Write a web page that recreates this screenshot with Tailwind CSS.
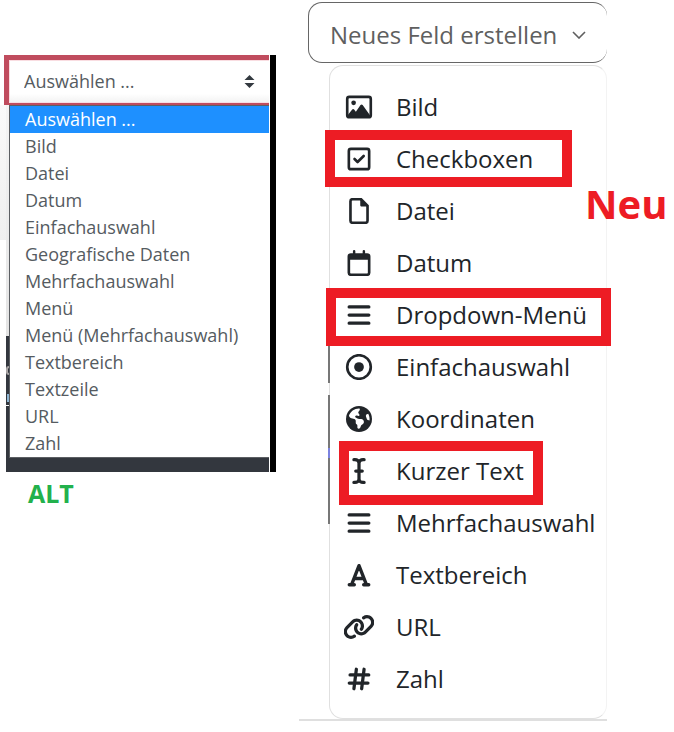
<!DOCTYPE html>
<html lang="de">
<head>
    <meta charset="UTF-8">
    <meta name="viewport" content="width=device-width, initial-scale=1">
    <title>Neues Feld erstellen</title>
    <!-- Tailwind CSS -->
    <script src="https://cdn.jsdelivr.net/npm/@tailwindcss/browser@4"></script>
</head>
<body class="bg-white font-['Open_Sans','Noto_Sans',sans-serif] text-[#212529]">

<main class="grid grid-cols-[276fr_331fr_67fr] items-start">

    <!-- Old field selection -->
    <section class="pt-[55px]">
        <div class="flex">
            <div class="min-w-0 flex-1">
                <div class="ml-1 border-5 border-r-0 border-[#c04c5e] bg-white">
                    <div class="relative border border-r-0 border-[#f9dde1]">
                        <select aria-label="Feldtyp" class="block h-[41px] w-full appearance-none bg-white bg-linear-to-b from-white from-80% to-[#f3f3f3] pl-[14px] text-[18px] leading-[27px] text-[#555b61]">
                            <option>Auswählen ...</option>
                        </select>
                        <svg class="pointer-events-none absolute top-[14px] right-[14px] h-[13px] w-[11px]" viewBox="0 0 11 13" fill="#343a40"><path d="M5.5 0 10.5 5H.5zM5.5 13 10.5 8H.5z"/></svg>
                    </div>
                </div>
                <div class="relative ml-[6px] bg-linear-to-b from-[#f4f4f4] from-0% via-[#e4e4e4] via-63% to-[#33373e] to-63% pb-[14px] pl-[3px]">
                    <!-- page behind the open list -->
                    <span class="absolute top-0 -left-[6px] h-[135px] w-[6px] bg-linear-to-b from-[#fafafa] to-[#efefef]"></span>
                    <span class="absolute top-[261px] left-0 h-[9px] w-[3px] rounded-l-full border-2 border-r-0 border-[#a9a5a5]"></span>
                    <span class="absolute top-[289px] left-px h-[8px] w-[2px] bg-[#8fb6d3]"></span>
                    <span class="absolute top-[300px] left-0 h-px w-[3px] bg-white"></span>
                    <ul class="relative -mt-[3px] border-t border-b border-l border-[#5c5f63] bg-white text-[18px] leading-[27px] text-[#555b61]" role="listbox" aria-label="Feldtyp">
                        <li class="bg-[#1e90ff] pl-[15px] text-white" role="option" aria-selected="true">Auswählen ...</li>
                        <li class="pl-[15px]" role="option">Bild</li>
                        <li class="pl-[15px]" role="option">Datei</li>
                        <li class="pl-[15px]" role="option">Datum</li>
                        <li class="pl-[15px]" role="option">Einfachauswahl</li>
                        <li class="pl-[15px]" role="option">Geografische Daten</li>
                        <li class="pl-[15px]" role="option">Mehrfachauswahl</li>
                        <li class="pl-[15px]" role="option">Menü</li>
                        <li class="pl-[15px]" role="option">Menü (Mehrfachauswahl)</li>
                        <li class="pl-[15px]" role="option">Textbereich</li>
                        <li class="pl-[15px]" role="option">Textzeile</li>
                        <li class="pl-[15px]" role="option">URL</li>
                        <li class="pl-[15px]" role="option">Zahl</li>
                    </ul>
                </div>
            </div>
            <div class="ml-px w-[6px] bg-black"></div>
        </div>
        <p class="pt-1 pl-7 text-[25px] leading-[34px] font-bold text-[#22b14c]">ALT</p>
    </section>

    <!-- New field selection -->
    <section class="ml-[23px] border-b-2 border-[#dfdfdf] pt-[2px]">
        <button type="button" class="ml-[9px] flex h-[61px] w-[calc(100%-9px)] items-center rounded-[14px] border border-r-0 border-[#666] pt-[5px] pl-[21px] text-2xl text-[#5f5f5f]">
            Neues Feld erstellen
            <svg class="ml-[15px] h-[8px] w-[14px]" viewBox="0 0 14 8" fill="none" stroke="#5f5f5f" stroke-width="1.6"><path d="M1 1l6 6 6-6"/></svg>
        </button>
        <ul class="relative mt-[2px] ml-[30px] rounded-[14px] border border-[#e0e0e0] border-r-[#f3f3f3] pt-[15px] pb-[13px] text-2xl">
            <li>
                <button type="button" class="flex h-[52px] w-full items-center gap-[22px] pl-[14px]">
                    <svg class="h-[26px] w-[30px]" viewBox="0 0 512 512" fill="#212529"><rect x="24" y="56" width="464" height="400" rx="40" fill="none" stroke="#212529" stroke-width="52"/><circle cx="150" cy="174" r="46"/><path d="M40 440v-30l82-106c10-14 28-14 38 0l34 46 92-132c12-18 30-18 42 0l144 202v20z"/></svg>
                    Bild
                </button>
            </li>
            <li class="relative">
                <button type="button" class="flex h-[52px] w-full items-center gap-[22px] pl-[14px]">
                    <svg class="h-[26px] w-[30px]" viewBox="-32 0 512 512" fill="none" stroke="#212529" stroke-width="52" stroke-linecap="round" stroke-linejoin="round"><rect x="24" y="56" width="400" height="400" rx="40"/><path d="M136 256l60 60 120-120"/></svg>
                    Checkboxen
                </button>
                <span class="pointer-events-none absolute -top-[3px] -left-[5px] h-[57px] w-[247px] border-10 border-[#ed1c24]"></span>
            </li>
            <li>
                <button type="button" class="flex h-[52px] w-full items-center gap-[22px] pl-[14px]">
                    <svg class="h-[26px] w-[30px]" viewBox="-64 0 512 512" fill="#212529"><path d="M64 24H232L360 152V448a40 40 0 0 1-40 40H64a40 40 0 0 1-40-40V64a40 40 0 0 1 40-40z" fill="none" stroke="#212529" stroke-width="52"/><path d="M216 16v120c0 18 14 32 32 32h120z"/></svg>
                    Datei
                </button>
            </li>
            <li>
                <button type="button" class="flex h-[52px] w-full items-center gap-[22px] pl-[14px]">
                    <svg class="h-[26px] w-[30px]" viewBox="-32 0 512 512" fill="#212529"><rect x="24" y="88" width="400" height="400" rx="40" fill="none" stroke="#212529" stroke-width="52"/><path d="M24 88h400v104H24z"/><path d="M128 24v80M320 24v80" stroke="#212529" stroke-width="48" stroke-linecap="round"/></svg>
                    Datum
                </button>
            </li>
            <li class="relative">
                <button type="button" class="flex h-[52px] w-full items-center gap-[22px] pl-[14px]">
                    <svg class="h-[26px] w-[30px]" viewBox="-32 0 512 512" stroke="#212529" stroke-width="64" stroke-linecap="round"><path d="M30 96h388M30 256h388M30 416h388"/></svg>
                    Dropdown-Menü
                </button>
                <!-- darker edge beside the following rows -->
                <span class="absolute top-[55px] -left-[2px] h-[39px] w-[2px] bg-[#777]"></span>
                <span class="absolute top-[106px] -left-[2px] h-[129px] w-[2px] bg-[#777]"></span>
                <span class="absolute top-[159px] -left-[2px] h-[10px] w-[2px] bg-[#7b83e0]"></span>
                <span class="pointer-events-none absolute -top-[1px] -left-[4px] h-[58px] w-[285px] border-10 border-[#ed1c24]"></span>
            </li>
            <li>
                <button type="button" class="flex h-[52px] w-full items-center gap-[22px] pl-[14px]">
                    <svg class="h-[26px] w-[30px]" viewBox="0 0 512 512" fill="#212529"><circle cx="256" cy="256" r="232" fill="none" stroke="#212529" stroke-width="52"/><circle cx="256" cy="256" r="96"/></svg>
                    Einfachauswahl
                </button>
            </li>
            <li>
                <button type="button" class="flex h-[52px] w-full items-center gap-[22px] pl-[14px]">
                    <svg class="h-[26px] w-[30px]" viewBox="0 0 512 512" fill="#212529"><circle cx="256" cy="256" r="256"/><path fill="#fff" d="M57.7 193l9.4 16.4c8.3 14.5 21.9 25.2 38 29.8L163 255.7c17.2 4.9 29 20.6 29 38.5v39.9c0 11 6.2 21 16 25.9s16 14.9 16 25.9v39c0 15.6 14.9 26.9 29.9 22.6c16.1-4.6 28.6-17.5 32.7-33.8l2.8-11.2c4.2-16.9 15.2-31.4 30.3-40l8.1-4.6c15-8.5 24.2-24.5 24.2-41.7v-8.3c0-12.7-5.1-24.9-14.1-33.9l-3.9-3.9c-9-9-21.2-14.1-33.9-14.1H257c-11.1 0-22.1-2.9-31.8-8.4l-34.5-19.7c-4.3-2.5-7.6-6.5-9.2-11.2c-3.2-9.6 1.1-20 10.2-24.5l5.9-3c6.6-3.3 14.3-3.9 21.3-1.5l23.2 7.7c8.2 2.7 17.2-.4 21.9-7.5c4.7-7 4.2-16.3-1.2-22.8l-13.6-16.3c-10-12-9.9-29.5 .3-41.3l15.7-18.3c8.8-10.3 10.2-25 3.5-36.7l-2.4-4.2c-3.5-.2-6.9-.3-10.4-.3C163.1 48 84.4 108.9 57.7 193zM464 256c0-36.8-9.6-71.4-26.4-101.5L412 164.8c-15.7 6.3-23.8 23.8-18.5 39.8l16.9 50.7c3.5 10.4 12 18.3 22.6 20.9l29.1 7.3c1.2-9 1.8-18.2 1.8-27.5z"/></svg>
                    Koordinaten
                </button>
            </li>
            <li class="relative">
                <button type="button" class="flex h-[52px] w-full items-center gap-[22px] pl-[14px]">
                    <svg class="h-[26px] w-[30px]" viewBox="0 0 512 512" fill="none" stroke="#212529" stroke-width="64" stroke-linecap="round"><path d="M156 32h20c44 0 80 28 80 64v320c0 36-36 64-80 64h-20M356 32h-20c-44 0-80 28-80 64M356 480h-20c-44 0-80-28-80-64M192 256h128"/></svg>
                    Kurzer Text
                </button>
                <span class="pointer-events-none absolute -top-[4px] left-[9px] h-[64px] w-[204px] border-10 border-[#ed1c24]"></span>
            </li>
            <li>
                <button type="button" class="flex h-[52px] w-full items-center gap-[22px] pl-[14px]">
                    <svg class="h-[26px] w-[30px]" viewBox="-32 0 512 512" stroke="#212529" stroke-width="64" stroke-linecap="round"><path d="M30 96h388M30 256h388M30 416h388"/></svg>
                    Mehrfachauswahl
                </button>
            </li>
            <li>
                <button type="button" class="flex h-[52px] w-full items-center gap-[22px] pl-[14px]">
                    <svg class="h-[26px] w-[30px]" viewBox="0 0 512 512" fill="none" stroke="#212529" stroke-width="66" stroke-linecap="round" stroke-linejoin="round"><path d="M64 448h100M348 448h100M112 440 256 72 400 440M164 324h184"/></svg>
                    Textbereich
                </button>
            </li>
            <li>
                <button type="button" class="flex h-[52px] w-full items-center gap-[22px] pl-[14px]">
                    <svg class="h-[26px] w-[30px]" viewBox="24 0 592 512" fill="#212529"><path d="M579.8 267.7c56.5-56.5 56.5-148 0-204.5c-50-50-128.8-56.5-186.3-15.4l-1.6 1.1c-14.4 10.3-17.7 30.3-7.4 44.6s30.3 17.7 44.6 7.4l1.6-1.1c32.1-22.9 76-19.3 103.8 8.6c31.5 31.5 31.5 82.5 0 114L422.3 334.8c-31.5 31.5-82.5 31.5-114 0c-27.9-27.9-31.5-71.8-8.6-103.8l1.1-1.6c10.3-14.4 6.9-34.4-7.4-44.6s-34.4-6.9-44.6 7.4l-1.1 1.6C206.5 251.2 213 330 263 380c56.5 56.5 148 56.5 204.5 0L579.8 267.7zM60.2 244.3c-56.5 56.5-56.5 148 0 204.5c50 50 128.8 56.5 186.3 15.4l1.6-1.1c14.4-10.3 17.7-30.3 7.4-44.6s-30.3-17.7-44.6-7.4l-1.6 1.1c-32.1 22.9-76 19.3-103.8-8.6C74 372 74 321 105.5 289.5L217.7 177.2c31.5-31.5 82.5-31.5 114 0c27.9 27.9 31.5 71.8 8.6 103.9l-1.1 1.6c-10.3 14.4-6.9 34.4 7.4 44.6s34.4 6.9 44.6-7.4l1.1-1.6C433.5 260.8 427 182 377 132c-56.5-56.5-148-56.5-204.5 0L60.2 244.3z"/></svg>
                    URL
                </button>
            </li>
            <li>
                <button type="button" class="flex h-[52px] w-full items-center gap-[22px] pl-[14px]">
                    <svg class="h-[26px] w-[30px]" viewBox="0 0 512 512" fill="none" stroke="#212529" stroke-width="64" stroke-linecap="round"><path d="M80 176h368M64 336h368M204 64l-48 384M356 64l-48 384"/></svg>
                    Zahl
                </button>
            </li>
        </ul>
    </section>

    <p class="relative -ml-[22px] pt-[174px] text-[40px] font-bold text-[#ed1c24]">Neu</p>

</main>

</body>
</html>
